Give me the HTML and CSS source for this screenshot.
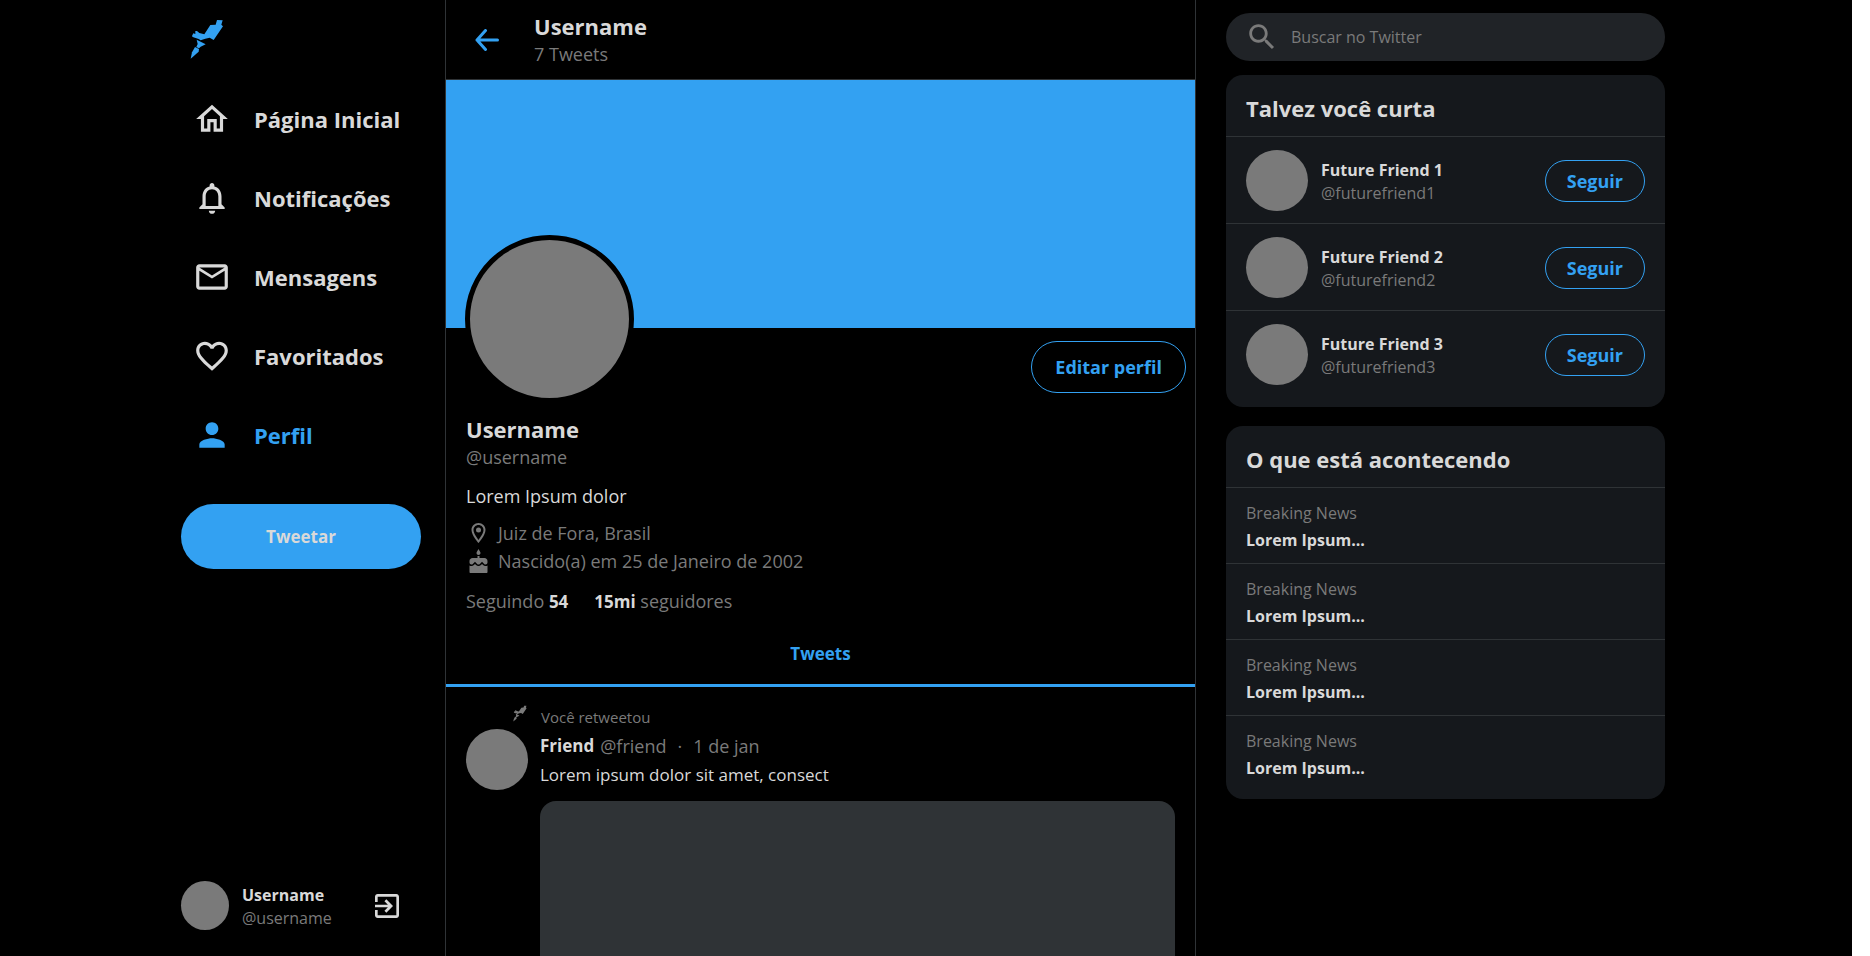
FILE: index.html
```html
<!DOCTYPE html>
<html lang="pt-BR">
<head>
<meta charset="utf-8">
<meta name="viewport" content="width=device-width, initial-scale=1">
<title>Username</title>
<link rel="stylesheet" href="styles.css">
</head>
<body>
<svg class="defs" aria-hidden="true">
  <symbol id="rocket" viewBox="60 58 102 120">
    <path d="M141 61L158 62 154 75 159 80 131 121 119 114 106 117 92 122 86 118 68 112 66 109 70 101 76 103 76 94 81 94 88 100 103 104 121 76 137 75Z"/>
    <path d="M80 120L92 126 107 134 92 141 87 146 79 142 83 133Z"/>
    <path d="M75 142L87 148 86 156 62 177 66 158Z"/>
  </symbol>
</svg>
<div class="page">
  <div class="wrapper">
    <aside class="menu">
      <div class="menu-top">
        <a class="logo" href="#" aria-label="Início"><svg><use href="#rocket"/></svg></a>
        <nav class="nav">
          <a href="#"><svg viewBox="0 0 24 24"><path d="M12 5.69l5 4.5V18h-2v-6H9v6H7v-7.81l5-4.5M12 3L2 12h3v8h6v-6h2v6h6v-8h3L12 3z"/></svg><span>Página Inicial</span></a>
          <a href="#"><svg viewBox="0 0 24 24"><path d="M12 22c1.1 0 2-.9 2-2h-4c0 1.1.9 2 2 2zm6-6v-5c0-3.07-1.63-5.64-4.5-6.32V4c0-.83-.67-1.5-1.5-1.5s-1.5.67-1.5 1.5v.68C7.64 5.36 6 7.92 6 11v5l-2 2v1h16v-1l-2-2zm-2 1H8v-6c0-2.48 1.51-4.5 4-4.5s4 2.02 4 4.5v6z"/></svg><span>Notificações</span></a>
          <a href="#"><svg viewBox="0 0 24 24"><path d="M22 6c0-1.1-.9-2-2-2H4c-1.1 0-2 .9-2 2v12c0 1.1.9 2 2 2h16c1.1 0 2-.9 2-2V6zm-2 0l-8 5-8-5h16zm0 12H4V8l8 5 8-5v10z"/></svg><span>Mensagens</span></a>
          <a href="#"><svg viewBox="0 0 24 24"><path d="M16.5 3c-1.74 0-3.41.81-4.5 2.09C10.91 3.81 9.24 3 7.5 3 4.42 3 2 5.42 2 8.5c0 3.78 3.4 6.86 8.55 11.54L12 21.35l1.45-1.32C18.6 15.36 22 12.28 22 8.5 22 5.42 19.58 3 16.5 3zm-4.4 15.55l-.1.1-.1-.1C7.14 14.24 4 11.39 4 8.5 4 6.5 5.5 5 7.5 5c1.54 0 3.04.99 3.57 2.36h1.87C13.46 5.99 14.96 5 16.5 5c2 0 3.5 1.5 3.5 3.5 0 2.89-3.14 5.74-7.9 10.05z"/></svg><span>Favoritados</span></a>
          <a class="active" href="#"><svg viewBox="0 0 24 24"><path d="M12 12c2.21 0 4-1.79 4-4s-1.79-4-4-4-4 1.79-4 4 1.79 4 4 4zm0 2c-2.67 0-8 1.34-8 4v2h16v-2c0-2.66-5.33-4-8-4z"/></svg><span>Perfil</span></a>
        </nav>
        <button class="tweet-button" type="button">Tweetar</button>
      </div>
      <div class="account">
        <div class="avatar avatar-small"></div>
        <div class="identity"><strong>Username</strong><span>@username</span></div>
        <button class="exit" type="button" aria-label="Sair"><svg viewBox="0 0 24 24"><path d="M10.09 15.59L11.5 17l5-5-5-5-1.41 1.41L12.67 11H3v2h9.67l-2.58 2.59zM19 3H5c-1.11 0-2 .9-2 2v4h2V5h14v14H5v-4H3v4c0 1.1.89 2 2 2h14c1.1 0 2-.9 2-2V5c0-1.1-.9-2-2-2z"/></svg></button>
      </div>
    </aside>

    <main class="main">
      <header class="main-header">
        <button class="back" type="button" aria-label="Voltar"><svg viewBox="0 0 24 22"><path d="M10.500 1.500L2 11l8.500 9.500M2 11h20.500"/></svg></button>
        <div><h1>Username</h1><p>7 Tweets</p></div>
      </header>
      <section class="profile">
        <div class="banner"><div class="avatar portrait"></div></div>
        <div class="profile-data">
          <button class="outline-button edit" type="button">Editar perfil</button>
          <h2>Username</h2>
          <p class="handle">@username</p>
          <p class="bio">Lorem Ipsum dolor</p>
          <ul class="facts">
            <li><svg viewBox="0 0 24 24"><path d="M12 2C8.130 2 5 5.130 5 9c0 5.250 7 13 7 13s7-7.750 7-13c0-3.870-3.130-7-7-7zM7 9c0-2.760 2.240-5 5-5s5 2.240 5 5c0 2.880-2.880 7.190-5 9.880C9.920 16.210 7 11.850 7 9z"/><circle cx="12" cy="9" r="2.500"/></svg>Juiz de Fora, Brasil</li>
            <li><svg viewBox="0 0 24 24"><path d="M12 6c1.11 0 2-.9 2-2 0-.38-.1-.73-.29-1.03L12 0l-1.71 2.97c-.19.3-.29.65-.29 1.03 0 1.1.9 2 2 2zm4.6 9.99l-1.07-1.07-1.08 1.07c-1.3 1.3-3.58 1.31-4.89 0l-1.07-1.07-1.09 1.07C6.75 16.64 5.88 17 4.96 17c-.73 0-1.4-.23-1.960-.61V23c0 .55.45 1 1 1h16c.55 0 1-.45 1-1v-6.610c-.56.38-1.230.61-1.960.61-.92 0-1.790-.36-2.440-1.010zM18 9h-5V7h-2v2H6c-1.66 0-3 1.34-3 3v1.54c0 1.08.88 1.96 1.96 1.96.52 0 1.02-.2 1.38-.57l2.14-2.13 2.13 2.13c.74.74 2.03.74 2.77 0l2.14-2.13 2.13 2.13c.37.37.86.57 1.38.57 1.08 0 1.96-.88 1.96-1.960V12C21 10.34 19.66 9 18 9z"/></svg>Nascido(a) em 25 de Janeiro de 2002</li>
          </ul>
          <p class="followage"><span>Seguindo <strong>54</strong></span><span><strong>15mi</strong> seguidores</span></p>
        </div>
      </section>
      <a class="tab" href="#">Tweets</a>
      <article class="tweet">
        <p class="retweeted"><svg><use href="#rocket"/></svg>Você retweetou</p>
        <div class="tweet-body">
          <div class="avatar"></div>
          <div class="tweet-content">
            <p class="tweet-head"><strong>Friend</strong><span>@friend</span><span class="dot">·</span><time>1 de jan</time></p>
            <p class="tweet-text">Lorem ipsum dolor sit amet, consect</p>
            <div class="media"></div>
          </div>
        </div>
      </article>
    </main>

    <aside class="side">
      <label class="search">
        <svg viewBox="0 0 24 24"><path d="M15.5 14h-.79l-.28-.27C15.41 12.59 16 11.11 16 9.500 16 5.910 13.090 3 9.500 3S3 5.910 3 9.500 5.910 16 9.500 16c1.610 0 3.090-.59 4.230-1.570l.27.28v.79l5 4.990L20.490 19l-4.990-5zm-6 0C7.010 14 5 11.990 5 9.500S7.010 5 9.500 5 14 7.010 14 9.500 11.990 14 9.500 14z"/></svg>
        <input type="text" placeholder="Buscar no Twitter" aria-label="Buscar no Twitter">
      </label>
      <section class="card">
        <h2>Talvez você curta</h2>
        <div class="friend"><div class="avatar"></div><div class="identity"><strong>Future Friend 1</strong><span>@futurefriend1</span></div><button class="outline-button" type="button">Seguir</button></div>
        <div class="friend"><div class="avatar"></div><div class="identity"><strong>Future Friend 2</strong><span>@futurefriend2</span></div><button class="outline-button" type="button">Seguir</button></div>
        <div class="friend"><div class="avatar"></div><div class="identity"><strong>Future Friend 3</strong><span>@futurefriend3</span></div><button class="outline-button" type="button">Seguir</button></div>
      </section>
      <section class="card">
        <h2>O que está acontecendo</h2>
        <div class="news"><span>Breaking News</span><strong>Lorem Ipsum...</strong></div>
        <div class="news"><span>Breaking News</span><strong>Lorem Ipsum...</strong></div>
        <div class="news"><span>Breaking News</span><strong>Lorem Ipsum...</strong></div>
        <div class="news"><span>Breaking News</span><strong>Lorem Ipsum...</strong></div>
      </section>
    </aside>
  </div>
</div>
</body>
</html>
```
FILE: styles.css
```css
:root {
  --white: #d9d9d9;
  --gray: #7a7a7a;
  --outline: #2f3336;
  --blue: #33a1f2;
  --card: #15181c;
  --search: #202327;
}

* { margin: 0; padding: 0; box-sizing: border-box; }

body {
  background: #fff;
  color: var(--white);
  font-family: "Segoe UI", "Open Sans", "Noto Sans", sans-serif;
  font-size: 18px;
  line-height: 28px;
}

button, input { font: inherit; color: inherit; background: none; border: 0; }
button { cursor: pointer; font-weight: 700; }
a { color: inherit; text-decoration: none; }
ul { list-style: none; }
svg { display: block; flex-shrink: 0; fill: currentColor; }
.defs { position: absolute; width: 0; height: 0; }

.page {
  height: 100vh;
  margin-right: 18px;
  background: #000;
  overflow: hidden;
}

.wrapper {
  display: flex;
  height: 100%;
  max-width: 1500px;
  margin: 0 auto;
}

h1, h2 { font-size: 22px; line-height: 28px; font-weight: 700; }

.avatar {
  flex-shrink: 0;
  width: 62px;
  height: 61px;
  border-radius: 50%;
  background: var(--gray);
}

.identity {
  display: flex;
  flex-direction: column;
  padding-top: 2px;
  font-size: 16px;
  line-height: 23px;
}
.identity span { color: var(--gray); }

.outline-button {
  border: 1px solid var(--blue);
  border-radius: 26px;
  color: var(--blue);
}

/* Left menu */
.menu {
  display: flex;
  flex-direction: column;
  justify-content: space-between;
  flex: 0 0 269px;
  padding: 19px 24px 26px 5px;
}
.menu-top { display: flex; flex-direction: column; }
.logo { align-self: flex-start; margin-left: 9px; color: var(--blue); }
.logo svg { width: 34px; height: 40px; }
.nav { display: flex; flex-direction: column; gap: 41px; margin: 41px 0 50px 12px; }
.nav a { display: flex; align-items: center; gap: 23px; font-size: 22px; font-weight: 700; }
.nav svg { width: 38px; height: 38px; }
.nav .active { color: var(--blue); }
.tweet-button { height: 65px; border-radius: 33px; background: var(--blue); font-size: 17px; }
.account { display: flex; align-items: center; gap: 13px; }
.avatar-small { width: 48px; height: 49px; }
.exit { margin: 0 18px 0 auto; }
.exit svg { width: 32px; height: 32px; }

/* Profile column */
.main {
  flex: 1 1 751px;
  border: solid var(--outline);
  border-width: 0 1px;
  overflow: hidden;
}
.main-header {
  display: flex;
  align-items: center;
  gap: 35px;
  height: 80px;
  padding-left: 29px;
  border-bottom: 1px solid var(--outline);
}
.main-header div { padding-top: 1px; }
.main-header p { color: var(--gray); }
.back { color: var(--blue); }
.back svg {
  width: 24px;
  height: 22px;
  fill: none;
  stroke: currentColor;
  stroke-width: 3;
  stroke-linecap: round;
  stroke-linejoin: round;
}
.banner { position: relative; height: 248px; background: var(--blue); }
.portrait {
  position: absolute;
  left: 19px;
  bottom: -75px;
  width: 169px;
  height: 168px;
  border: 5px solid #000;
}
.profile-data { display: flex; flex-direction: column; padding: 13px 9px 0 20px; }
.edit { align-self: flex-end; height: 52px; padding: 0 23px; }
.profile-data h2 { margin-top: 22px; }
.handle, .facts, .followage { color: var(--gray); }
.bio { margin: 11px 0 9px; }
.facts li { display: flex; align-items: center; gap: 7px; }
.facts svg { width: 25px; height: 24px; }
.followage { display: flex; gap: 26px; margin-top: 12px; }
.followage strong, .tweet-head strong { color: var(--white); font-size: 17px; }
.tab {
  display: block;
  padding: 24px 0 16px;
  border-bottom: 3px solid var(--blue);
  color: var(--blue);
  font-size: 17px;
  font-weight: 700;
  text-align: center;
}
.tweet { padding: 18px 20px 20px; }
.retweeted {
  display: flex;
  gap: 14px;
  padding-left: 47px;
  color: var(--gray);
  font-size: 15px;
  line-height: 24px;
}
.retweeted svg { width: 14px; height: 17px; }
.tweet-body { display: flex; gap: 12px; }
.tweet-content { flex: 1; }
.tweet-head { display: flex; gap: 6px; color: var(--gray); line-height: 34px; }
.dot { margin: 0 5px; }
.tweet-text { line-height: 24px; font-size: 17px; }
.media { height: 348px; margin-top: 14px; border-radius: 16px; background: var(--outline); }

/* Right column */
.side { flex: 0 0 480px; padding: 13px 11px 0 30px; }
.search {
  display: flex;
  align-items: center;
  gap: 12px;
  height: 48px;
  margin-bottom: 14px;
  padding: 0 19px;
  border-radius: 24px;
  background: var(--search);
  color: var(--gray);
}
.search svg { width: 34px; height: 34px; }
.search input { flex: 1; min-width: 0; outline: 0; font-size: 16px; }
.search input::placeholder { color: var(--gray); opacity: 1; }
.card {
  margin-bottom: 19px;
  padding-bottom: 8px;
  border-radius: 17px;
  background: var(--card);
  overflow: hidden;
}
.card h2 { padding: 19px 20px 14px; }
.friend {
  display: flex;
  align-items: center;
  gap: 13px;
  padding: 13px 20px 12px;
  border-top: 1px solid var(--outline);
}
.friend:last-child { padding-bottom: 14px; }
.friend .outline-button { height: 42px; margin-left: auto; padding: 0 21px; }
.news {
  display: flex;
  flex-direction: column;
  padding: 12px 20px 9px;
  border-top: 1px solid var(--outline);
  font-size: 16px;
  line-height: 27px;
}
.news span { color: var(--gray); }
```
